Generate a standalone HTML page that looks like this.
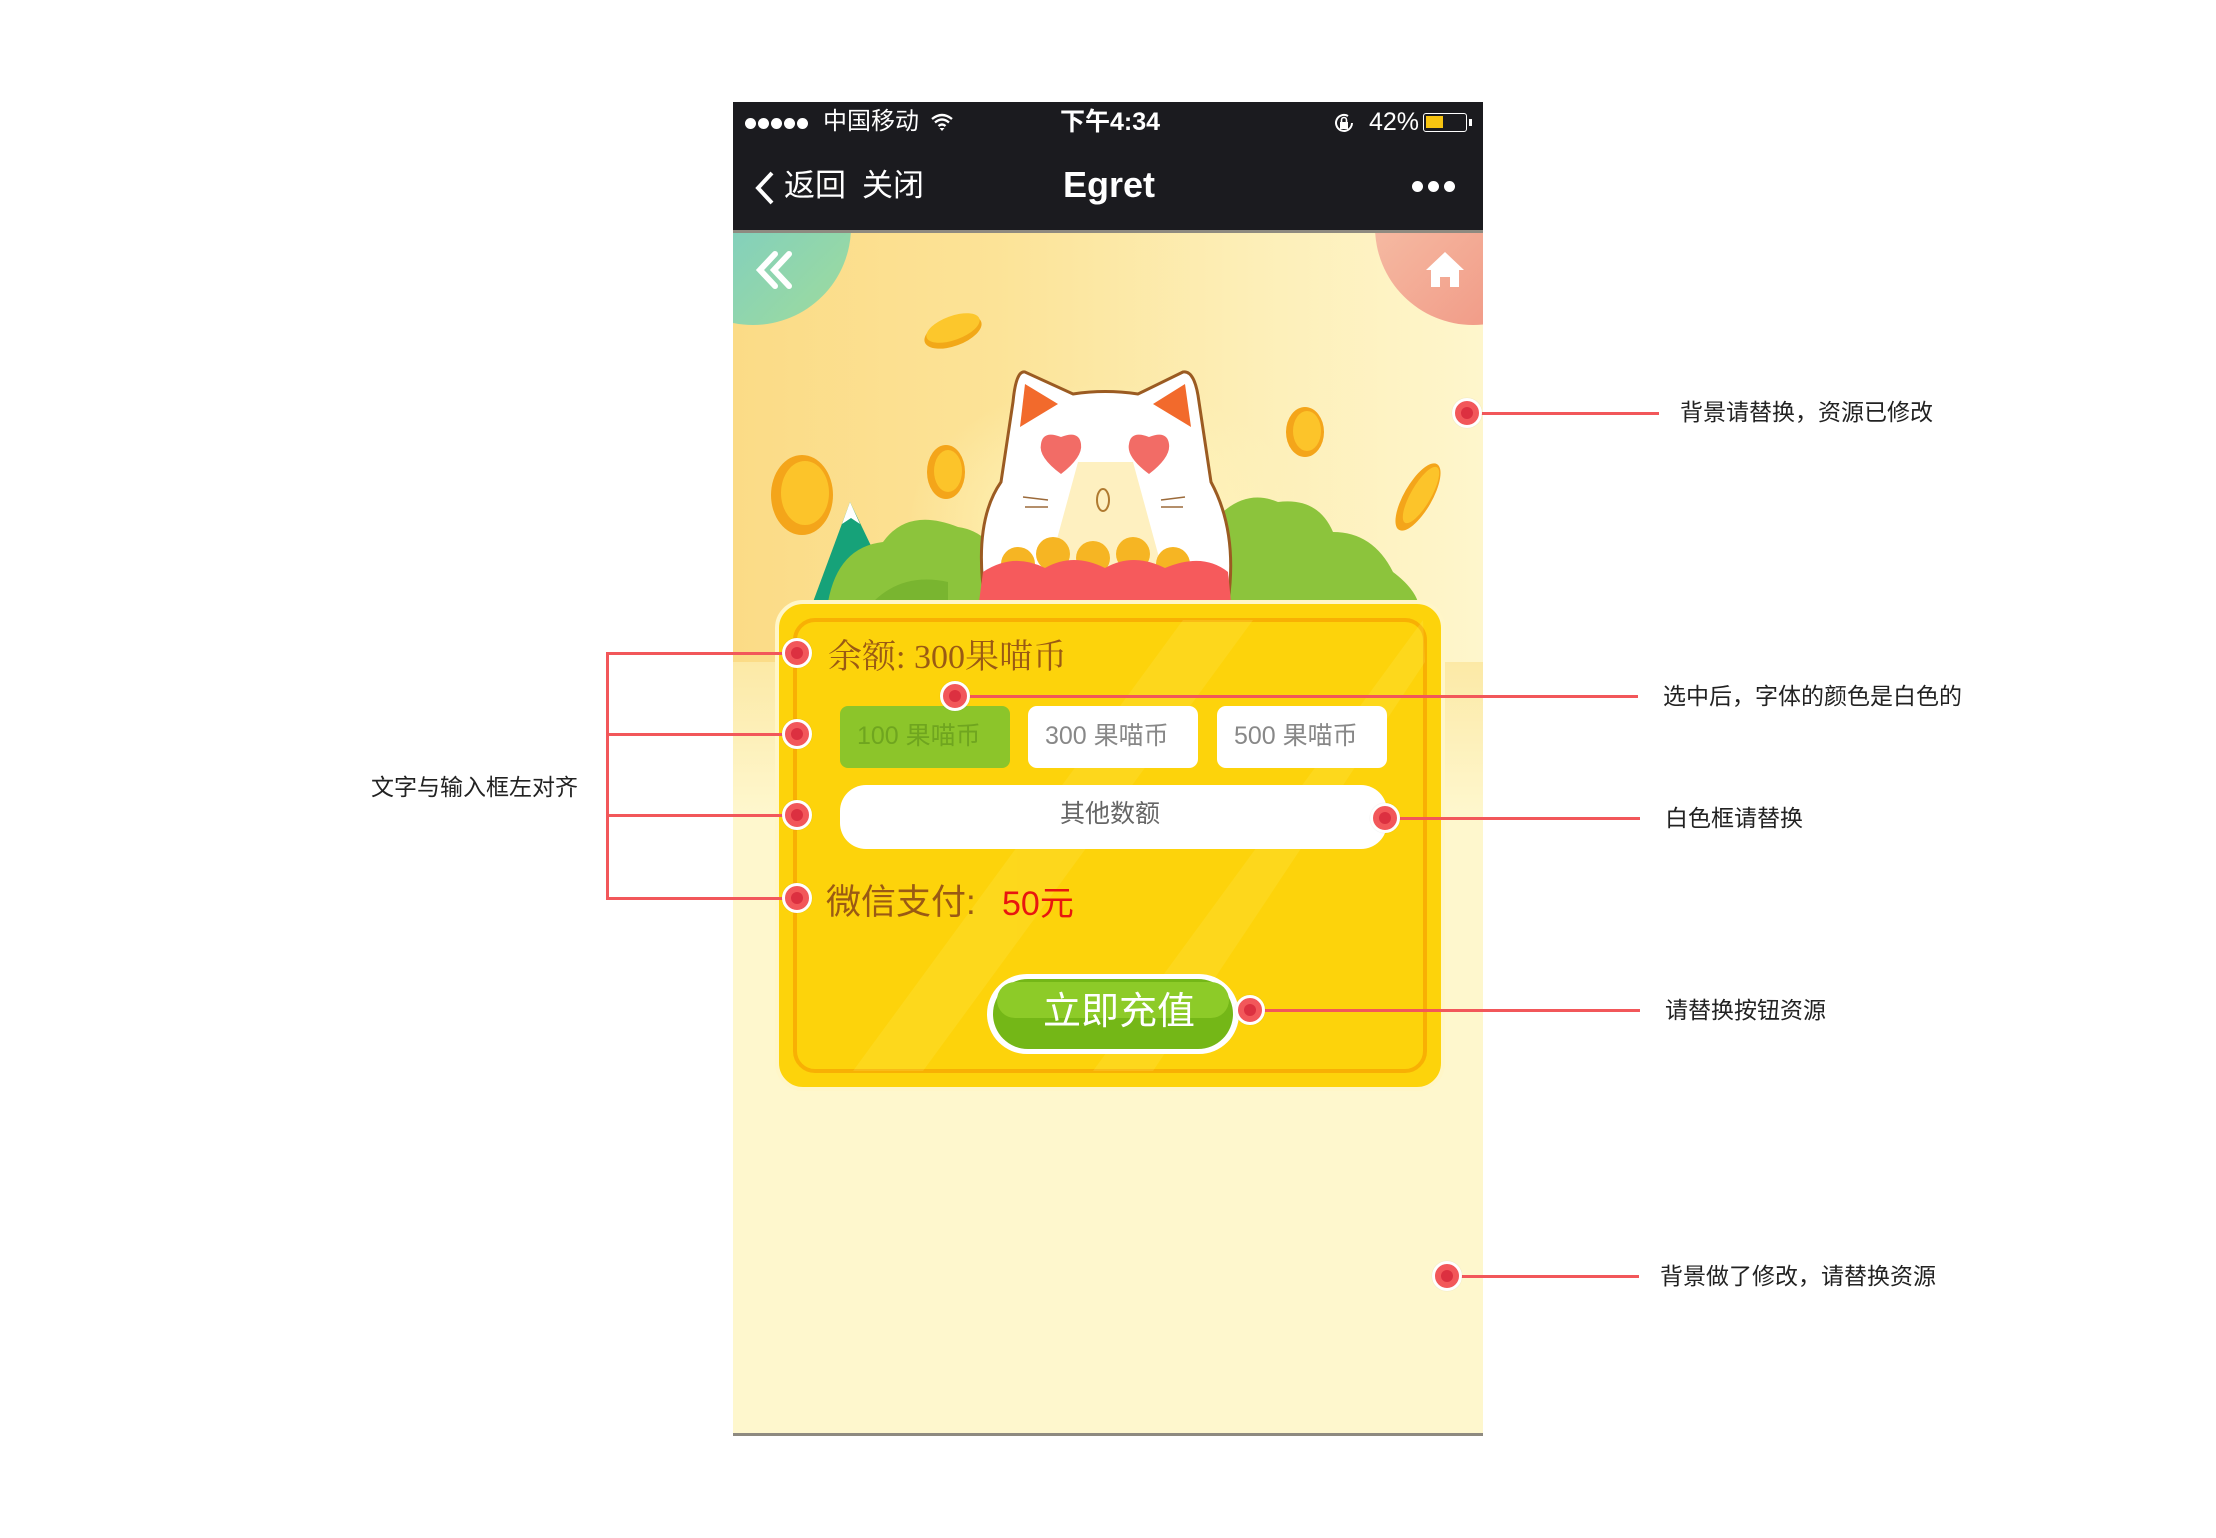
<!DOCTYPE html>
<html><head><meta charset="utf-8">
<style>
*{margin:0;padding:0;box-sizing:border-box}
body{width:2216px;height:1538px;background:#fff;position:relative;overflow:hidden;font-family:"Liberation Sans","Noto Sans CJK SC",sans-serif}
.a{position:absolute}
.t{position:absolute;white-space:nowrap;line-height:1}
.dot{position:absolute;width:30px;height:30px;border-radius:50%;background:#f2575a;border:3px solid #fff;margin:-15px 0 0 -15px;box-shadow:0 0 1px rgba(0,0,0,.15)}
.dot:after{content:"";position:absolute;left:6px;top:6px;width:12px;height:12px;border-radius:50%;background:#dc3040}
.ln{position:absolute;background:#f2575a;height:3px}
.note{position:absolute;font-size:23px;color:#222;line-height:1;white-space:nowrap}
.sd{position:absolute;top:118px;width:11px;height:11px;border-radius:50%;background:#fff}
</style></head><body>

<div class="a" style="left:733px;top:102px;width:750px;height:1334px;background:#fef7cd;overflow:hidden">
  <div class="a" style="left:0;top:131px;width:750px;height:470px;background:linear-gradient(90deg,#fbdb86 0%,#fce397 35%,#fdefb8 70%,#fef6cc 100%)"></div>
  <div class="a" style="left:0;top:560px;width:750px;height:150px;background:linear-gradient(#fce9a6,#fef7cd)"></div>
</div>

<svg class="a" style="left:733px;top:102px" width="750" height="1334" viewBox="0 0 750 1334">
  <defs>
    <clipPath id="cl"><rect x="0" y="131" width="750" height="1203"/></clipPath>
    <radialGradient id="glow" cx="0.5" cy="0.5" r="0.5"><stop offset="0" stop-color="#fff6c0"/><stop offset="1" stop-color="#fff6c0" stop-opacity="0"/></radialGradient>
    <linearGradient id="gc" x1="0" y1="0" x2="1" y2="1"><stop offset="0" stop-color="#6cc6d6"/><stop offset="1" stop-color="#9fdc9c"/></linearGradient>
    <linearGradient id="pc" x1="0" y1="0" x2="1" y2="1"><stop offset="0" stop-color="#f7c8ae"/><stop offset="1" stop-color="#f0907e"/></linearGradient>
  </defs>
  <g clip-path="url(#cl)">
  <ellipse cx="375" cy="420" rx="200" ry="140" fill="url(#glow)"/>
  <circle cx="20" cy="125" r="98" fill="url(#gc)"/>
  <circle cx="740" cy="125" r="98" fill="url(#pc)"/>
  <path d="M42 152 L27 168 L42 184 M56 152 L41 168 L56 184" stroke="#fff" stroke-width="6" fill="none" stroke-linecap="round"/>
  <path d="M693 168 L712 150 L731 168 L726 168 L726 185 L717 185 L717 175 L707 175 L707 185 L698 185 L698 168 Z" fill="#fff"/>
  <!-- coins -->
  <ellipse cx="220" cy="230" rx="30" ry="14" transform="rotate(-20 220 230)" fill="#f2a818"/>
  <ellipse cx="220" cy="226" rx="28" ry="12" transform="rotate(-20 220 226)" fill="#fcc72c"/>
  <ellipse cx="69" cy="393" rx="31" ry="40" fill="#f4a51a"/><ellipse cx="72" cy="391" rx="24" ry="32" fill="#fcc42a"/>
  <ellipse cx="213" cy="370" rx="19" ry="27" fill="#f4a51a"/><ellipse cx="215" cy="369" rx="14" ry="21" fill="#fcc42a"/>
  <ellipse cx="572" cy="330" rx="19" ry="25" fill="#f4a51a"/><ellipse cx="574" cy="329" rx="14" ry="20" fill="#fcc42a"/>
  <ellipse cx="685" cy="395" rx="14" ry="38" transform="rotate(30 685 395)" fill="#f4a51a"/>
  <ellipse cx="688" cy="393" rx="10" ry="32" transform="rotate(30 688 393)" fill="#fcc42a"/>
  <!-- mountain -->
  <path d="M80 500 L117 400 L165 500 Z" fill="#16a279"/>
  <path d="M117 400 L109 422 L118 416 L127 422 Z" fill="#fff"/>
  <!-- bushes -->
  <path d="M95 500 Q105 445 150 440 Q175 405 225 425 Q260 430 270 470 L270 500 Z" fill="#8cc43c"/>
  <path d="M470 500 L480 420 Q510 385 545 400 Q585 395 600 430 Q640 430 660 470 Q680 485 685 500 Z" fill="#8cc43c"/>
  <path d="M140 500 Q170 470 215 480 L215 500 Z" fill="#79b530"/>
  <!-- cat -->
  <path d="M252 500 Q240 420 268 380 L280 300 Q283 268 292 270 L340 292 Q372 287 405 292 L450 270 Q462 268 466 300 L478 380 Q505 430 495 500 Z" fill="#fff" stroke="#9b5b22" stroke-width="3"/>
  <path d="M287 325 L292 282 L325 302 Z" fill="#f26a2c"/>
  <path d="M458 325 L452 282 L420 302 Z" fill="#f26a2c"/>
  <path d="M315 470 L345 360 L400 360 L430 470 Z" fill="#fde48c" opacity=".55"/>
  <path d="M328 372 Q305 355 308 342 Q310 328 328 335 Q346 328 348 342 Q350 355 328 372 Z" fill="#f26c66"/>
  <path d="M416 372 Q393 355 396 342 Q398 328 416 335 Q434 328 436 342 Q438 355 416 372 Z" fill="#f26c66"/>
  <ellipse cx="370" cy="398" rx="6" ry="11" fill="none" stroke="#b07a30" stroke-width="2"/>
  <g stroke="#9b6a3a" stroke-width="1.5"><path d="M290 395 L315 398 M292 405 L315 405 M452 395 L428 398 M450 405 L428 405"/></g>
  <!-- coins in pouch -->
  <g fill="#f6b523"><circle cx="285" cy="462" r="17"/><circle cx="320" cy="452" r="17"/><circle cx="360" cy="456" r="17"/><circle cx="400" cy="452" r="17"/><circle cx="440" cy="462" r="17"/></g>
  <!-- pouch -->
  <path d="M246 500 L250 470 Q280 450 312 466 Q340 450 372 466 Q400 450 432 466 Q470 450 495 470 L498 500 Z" fill="#f65a5c"/>
  </g>
  <!-- card -->
  <rect x="44" y="500" width="666" height="487" rx="26" fill="#fdd30b" stroke="#fff6c8" stroke-width="4"/>
  <rect x="62" y="518" width="630" height="451" rx="20" fill="none" stroke="#f8b004" stroke-width="4"/>
  <g opacity=".18" fill="#ffec6a"><path d="M120 969 L450 518 L520 518 L190 969 Z"/><path d="M360 969 L690 518 L692 560 L420 969 Z"/></g>
  <rect x="107" y="604" width="170" height="62" rx="8" fill="#8cc52a"/>
  <rect x="295" y="604" width="170" height="62" rx="9" fill="#fff"/>
  <rect x="484" y="604" width="170" height="62" rx="9" fill="#fff"/>
  <rect x="107" y="683" width="547" height="64" rx="26" fill="#fff"/>
  <rect x="254" y="872" width="252" height="80" rx="40" fill="#fff"/>
  <rect x="260" y="877" width="240" height="70" rx="35" fill="#74b717"/>
  <rect x="264" y="880" width="232" height="36" rx="18" fill="#8dcb28"/>
  <!-- nav -->
  <rect x="0" y="0" width="750" height="128" fill="#1b1b1f"/>
  <rect x="0" y="128" width="750" height="3" fill="#8e8a80"/>
</svg>

<div class="sd" style="left:745px"></div><div class="sd" style="left:758px"></div><div class="sd" style="left:771px"></div><div class="sd" style="left:784px"></div><div class="sd" style="left:797px"></div>
<div class="t" style="left:823px;top:110px;color:#fff;font-size:24px">中国移动</div>
<svg class="a" style="left:930px;top:112px" width="24" height="20" viewBox="0 0 24 20"><path d="M2 7 Q12 -1 22 7 M5 10.5 Q12 4.5 19 10.5 M8.5 14 Q12 11 15.5 14" stroke="#fff" stroke-width="2.4" fill="none"/><path d="M9.5 16 L12 19 L14.5 16 Z" fill="#fff"/></svg>
<div class="t" style="left:1060px;top:110px;color:#fff;font-size:25px;font-weight:bold">下午4:34</div>
<svg class="a" style="left:1332px;top:111px" width="24" height="24" viewBox="0 0 24 24"><path d="M20 12 A8 8 0 1 1 16 5" stroke="#fff" stroke-width="2" fill="none"/><rect x="8" y="11" width="8" height="7" fill="#fff"/><path d="M9.5 11 V9 a2.5 2.5 0 0 1 5 0 V11" stroke="#fff" stroke-width="1.6" fill="none"/></svg>
<div class="t" style="left:1369px;top:110px;color:#fff;font-size:25px">42%</div>
<div class="a" style="left:1423px;top:113px;width:44px;height:19px;border:1.5px solid #fff;border-radius:3px"><div class="a" style="left:2px;top:2px;width:17px;height:12px;background:#f7c411"></div></div>
<div class="a" style="left:1469px;top:119px;width:3px;height:7px;background:#fff"></div>
<svg class="a" style="left:752px;top:170px" width="26" height="36" viewBox="0 0 26 36"><path d="M20 3 L6 18 L20 33" stroke="#fff" stroke-width="4" fill="none"/></svg>
<div class="t" style="left:784px;top:170px;color:#fff;font-size:31px">返回</div>
<div class="t" style="left:862px;top:170px;color:#fff;font-size:31px">关闭</div>
<div class="t" style="left:1063px;top:167px;color:#fff;font-size:36px;font-weight:bold">Egret</div>
<div class="a" style="left:1412px;top:181px;width:11px;height:11px;border-radius:50%;background:#fff"></div>
<div class="a" style="left:1428px;top:181px;width:11px;height:11px;border-radius:50%;background:#fff"></div>
<div class="a" style="left:1444px;top:181px;width:11px;height:11px;border-radius:50%;background:#fff"></div>

<div class="t" style="left:828px;top:641px;color:#9a5a14;font-size:34px;font-family:'Liberation Serif','Noto Serif CJK SC',serif">余额: 300果喵币</div>
<div class="t" style="left:857px;top:724px;color:#6fa51f;font-size:25px">100 果喵币</div>
<div class="t" style="left:1045px;top:724px;color:#888;font-size:25px">300 果喵币</div>
<div class="t" style="left:1234px;top:724px;color:#888;font-size:25px">500 果喵币</div>
<div class="t" style="left:1060px;top:802px;color:#666;font-size:25px">其他数额</div>
<div class="t" style="left:826px;top:885px;color:#9a5a14;font-size:35px">微信支付:</div>
<div class="t" style="left:1002px;top:887px;color:#e8160f;font-size:34px">50元</div>
<div class="t" style="left:1043px;top:993px;color:#fff;font-size:38px">立即充值</div>

<div class="ln" style="left:606px;top:652px;width:3px;height:248px"></div>
<div class="ln" style="left:606px;top:652px;width:190px"></div>
<div class="ln" style="left:606px;top:733px;width:190px"></div>
<div class="ln" style="left:606px;top:814px;width:190px"></div>
<div class="ln" style="left:606px;top:897px;width:190px"></div>
<div class="dot" style="left:797px;top:653px"></div>
<div class="dot" style="left:797px;top:734px"></div>
<div class="dot" style="left:797px;top:815px"></div>
<div class="dot" style="left:797px;top:898px"></div>
<div class="note" style="left:371px;top:776px">文字与输入框左对齐</div>

<div class="ln" style="left:1467px;top:412px;width:192px"></div>
<div class="dot" style="left:1467px;top:413px"></div>
<div class="note" style="left:1680px;top:401px">背景请替换，资源已修改</div>

<div class="ln" style="left:955px;top:695px;width:683px"></div>
<div class="dot" style="left:955px;top:696px"></div>
<div class="note" style="left:1663px;top:685px">选中后，字体的颜色是白色的</div>

<div class="ln" style="left:1385px;top:817px;width:255px"></div>
<div class="dot" style="left:1385px;top:818px"></div>
<div class="note" style="left:1665px;top:807px">白色框请替换</div>

<div class="ln" style="left:1250px;top:1009px;width:390px"></div>
<div class="dot" style="left:1250px;top:1010px"></div>
<div class="note" style="left:1665px;top:999px">请替换按钮资源</div>

<div class="ln" style="left:1447px;top:1275px;width:192px"></div>
<div class="dot" style="left:1447px;top:1276px"></div>
<div class="note" style="left:1660px;top:1265px">背景做了修改，请替换资源</div>

<div class="a" style="left:733px;top:1433px;width:750px;height:3px;background:#8e8a80"></div>
</body></html>
